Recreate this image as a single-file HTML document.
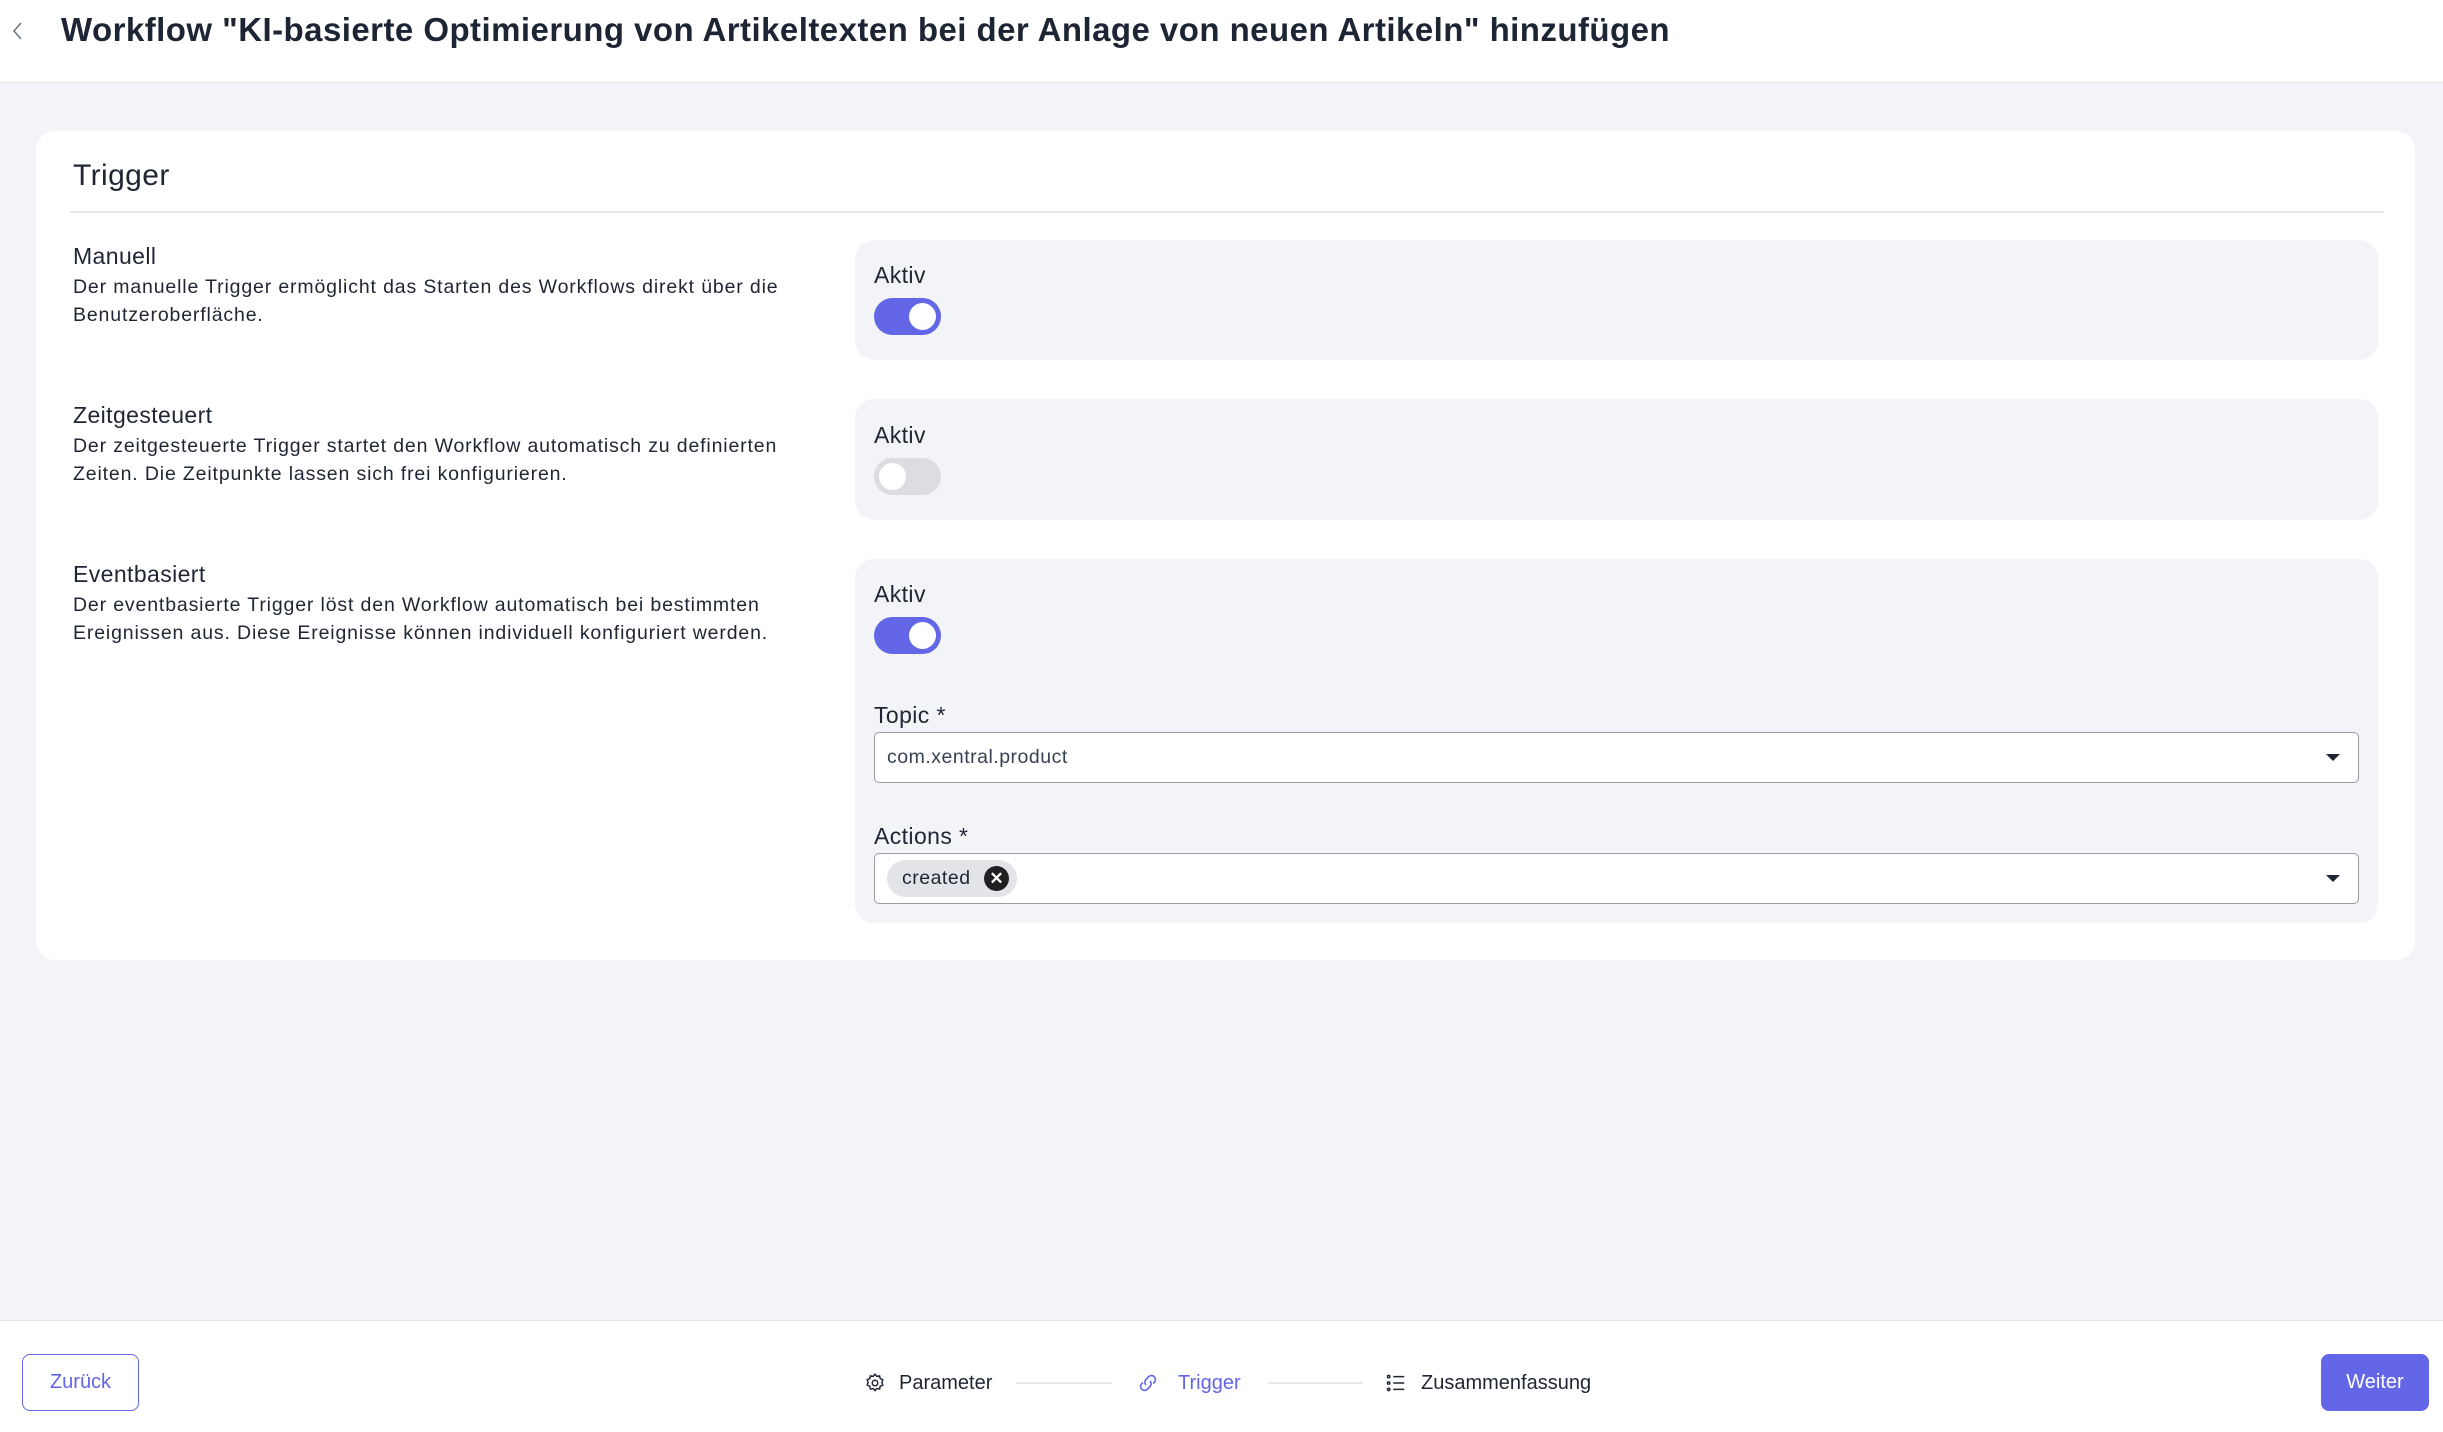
<!DOCTYPE html>
<html><head><meta charset="utf-8"><style>
*{box-sizing:border-box;margin:0;padding:0}
body{width:2443px;height:1432px;background:#f3f4f8;font-family:"Liberation Sans",sans-serif;color:#1f2533;position:relative;overflow:hidden}
.abs{position:absolute}
.header{left:0;top:0;width:2443px;height:83px;background:#fff;border-bottom:1px solid #e5e7eb}
.title{left:61px;top:10px;font-size:33px;font-weight:bold;line-height:40px;color:#1d2534;white-space:nowrap;letter-spacing:0.45px}
.card{left:36px;top:131px;width:2379px;height:829px;background:#fff;border-radius:19px}
.h2{left:73px;top:158px;font-size:30px;line-height:36px;letter-spacing:0.4px}
.divider{left:70px;top:211px;width:2314px;height:2px;background:#e5e7eb}
.st{font-size:23px;line-height:28px;left:73px;letter-spacing:0.4px}
.desc{font-size:19.5px;line-height:27.5px;left:73px;width:722px;letter-spacing:0.85px}
.panel{left:855px;width:1523px;background:#f3f4f8;border-radius:19px}
.lbl{font-size:23px;line-height:28px;left:874px;letter-spacing:0.4px}
.tog{left:874px;width:67px;height:37px;border-radius:19px;background:#6366e6}
.tog::after{content:"";position:absolute;right:5px;top:5px;width:27px;height:27px;border-radius:50%;background:#fff}
.tog.off{background:#dcdde2}
.tog.off::after{right:auto;left:5px}
.inp{left:874px;width:1485px;height:51px;background:#fff;border:1.5px solid #9a9ca3;border-radius:5px}
.caret{position:absolute;right:18px;top:21px;width:0;height:0;border-left:7px solid transparent;border-right:7px solid transparent;border-top:7px solid #1f2533}
.footer{left:0;top:1320px;width:2443px;height:112px;background:#fff;border-top:1px solid #e5e7eb}
.btn{top:1354px;height:57px;border-radius:8px;font-size:20px;display:flex;align-items:center;justify-content:center}
.step{top:1369px;font-size:20px;line-height:28px;white-space:nowrap}
.line{top:1382px;height:2px;background:#e5e7eb}
</style></head><body>
<div class="abs header"></div>
<svg class="abs" style="left:11px;top:20px" width="14" height="22" viewBox="0 0 14 22"><path d="M10 3 L3 11 L10 19" fill="none" stroke="#6b7280" stroke-width="1.5"/></svg>
<div class="abs title">Workflow "KI-basierte Optimierung von Artikeltexten bei der Anlage von neuen Artikeln" hinzufügen</div>

<div class="abs card"></div>
<div class="abs h2">Trigger</div>
<div class="abs divider"></div>

<div class="abs st" style="top:242px">Manuell</div>
<div class="abs desc" style="top:274px">Der manuelle Trigger ermöglicht das Starten des Workflows direkt über die Benutzeroberfläche.</div>
<div class="abs panel" style="top:240px;height:120px"></div>
<div class="abs lbl" style="top:261px">Aktiv</div>
<div class="abs tog" style="top:298px"></div>

<div class="abs st" style="top:401px">Zeitgesteuert</div>
<div class="abs desc" style="top:433px">Der zeitgesteuerte Trigger startet den Workflow automatisch zu definierten Zeiten. Die Zeitpunkte lassen sich frei konfigurieren.</div>
<div class="abs panel" style="top:399px;height:121px"></div>
<div class="abs lbl" style="top:421px">Aktiv</div>
<div class="abs tog off" style="top:458px"></div>

<div class="abs st" style="top:560px">Eventbasiert</div>
<div class="abs desc" style="top:592px">Der eventbasierte Trigger löst den Workflow automatisch bei bestimmten Ereignissen aus. Diese Ereignisse können individuell konfiguriert werden.</div>
<div class="abs panel" style="top:559px;height:364px"></div>
<div class="abs lbl" style="top:580px">Aktiv</div>
<div class="abs tog" style="top:617px"></div>
<div class="abs lbl" style="top:701px">Topic *</div>
<div class="abs inp" style="top:732px"><span style="position:absolute;left:12px;top:13px;font-size:19.5px;color:#374151;letter-spacing:0.5px">com.xentral.product</span><div class="caret"></div></div>
<div class="abs lbl" style="top:822px">Actions *</div>
<div class="abs inp" style="top:853px"><div style="position:absolute;left:12px;top:6px;height:37px;width:130px;border-radius:19px;background:#e3e4e8;font-size:19.5px;line-height:37px;padding-left:15px;color:#1f2533;letter-spacing:0.5px">created<span style="position:absolute;right:8px;top:6px;width:25px;height:25px;border-radius:50%;background:#1f2022;color:#fff;font-size:17px;line-height:25px;text-align:center;font-weight:bold;letter-spacing:0">✕</span></div><div class="caret"></div></div>

<div class="abs footer"></div>
<div class="abs btn" style="left:22px;width:117px;border:1.5px solid #6366e6;color:#6366e6;background:#fff">Zurück</div>
<div class="abs btn" style="left:2321px;width:108px;background:#6366e6;color:#fff">Weiter</div>

<svg class="abs" style="left:864px;top:1372px" width="22" height="22" viewBox="0 0 24 24" fill="none" stroke="#1f2533" stroke-width="1.6"><circle cx="12" cy="12" r="3"/><path d="M12 2.5l2 2.3 3-.6.7 3 2.8 1.3-1 2.9 1 2.9-2.8 1.3-.7 3-3-.6-2 2.3-2-2.3-3 .6-.7-3-2.8-1.3 1-2.9-1-2.9 2.8-1.3.7-3 3 .6z"/></svg>
<div class="abs step" style="left:899px">Parameter</div>
<div class="abs line" style="left:1016px;width:96px"></div>
<svg class="abs" style="left:1136px;top:1371px" width="24" height="24" viewBox="0 0 24 24" fill="none" stroke="#6366e6" stroke-width="1.6"><path d="M10 14a4 4 0 0 1 0-5.6l3-3a4 4 0 0 1 5.6 5.6l-1.5 1.5"/><path d="M14 10a4 4 0 0 1 0 5.6l-3 3a4 4 0 0 1-5.6-5.6l1.5-1.5"/></svg>
<div class="abs step" style="left:1178px;color:#6366e6">Trigger</div>
<div class="abs line" style="left:1268px;width:95px"></div>
<svg class="abs" style="left:1385px;top:1372px" width="22" height="22" viewBox="0 0 24 24" fill="none" stroke="#1f2533" stroke-width="1.6"><circle cx="4" cy="5" r="1.3"/><circle cx="4" cy="12" r="1.3"/><circle cx="4" cy="19" r="1.3"/><path d="M9 5h12M9 12h12M9 19h12"/></svg>
<div class="abs step" style="left:1421px">Zusammenfassung</div>
</body></html>
